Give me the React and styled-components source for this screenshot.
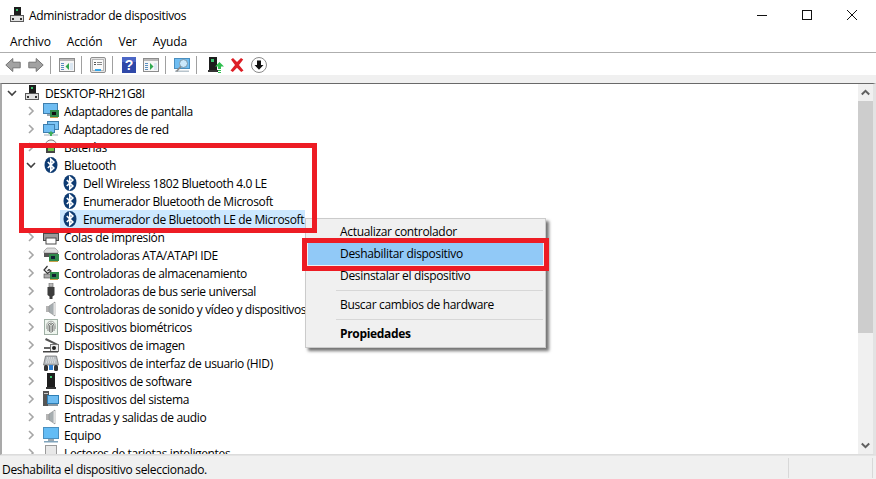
import React from "react";
import styled, { createGlobalStyle } from "styled-components";

const Global = createGlobalStyle`
  html, body { margin: 0; padding: 0; background: #fff; }
  body { font-family: "Open Sans", "Noto Sans", sans-serif; font-size: 12px; color: #000; }
  * { box-sizing: border-box; }
`;

const Window = styled.div`
  position: relative;
  width: 876px;
  height: 479px;
  overflow: hidden;
  background: #fff;
  display: flex;
  flex-direction: column;
`;
const TitleBar = styled.div`
  height: 30px;
  display: flex;
  align-items: center;
  padding-left: 9px;
  flex: none;
`;
const TitleText = styled.span`
  margin-left: 4px;
  letter-spacing: -0.32px;
`;
const WinControls = styled.div`
  margin-left: auto;
  display: flex;
  padding-right: 2px;
`;
const WinButton = styled.div`
  width: 45px;
  height: 30px;
  display: flex;
  align-items: center;
  justify-content: center;
`;
const MenuBar = styled.div`
  height: 23px;
  display: flex;
  align-items: center;
  gap: 16px;
  padding-left: 10px;
  border-bottom: 1px solid #aeaeae;
  flex: none;
`;
const MenuEntry = styled.span`
  letter-spacing: -0.16px;
`;
const Toolbar = styled.div`
  height: 22px;
  display: flex;
  align-items: center;
  padding: 2px 0 0 5px;
  flex: none;
`;
const ToolIcon = styled.div`
  width: 16px;
  height: 16px;
  margin-left: ${(p) => p.$gap ?? 0}px;
  flex: none;
`;
const ToolSep = styled.div`
  width: 1px;
  height: 18px;
  background: #a0a0a0;
  margin-left: ${(p) => p.$gap ?? 6}px;
  flex: none;
`;
const Strip = styled.div`
  height: 8px;
  background: #f0f0f0;
  flex: none;
`;
const TreeFrame = styled.div`
  height: 372px;
  flex: none;
  display: flex;
  border-top: 1px solid #696969;
  border-left: 2px solid #a9a9a9;
  border-right: 3px solid #e3e3e3;
  border-bottom: 1px solid #dcdcdc;
`;
const TreeList = styled.div`
  flex: 1;
  min-width: 0;
  overflow: hidden;
`;
const Row = styled.div`
  height: 18px;
  display: flex;
  align-items: center;
  white-space: nowrap;
  padding-left: ${(p) => p.$level * 19 + 2}px;
`;
const Chevron = styled.div`
  width: 16px;
  height: 18px;
  margin-right: 2px;
  display: flex;
  align-items: center;
  justify-content: center;
  flex: none;
`;
const Item = styled.div`
  height: 18px;
  display: flex;
  align-items: center;
  gap: 5px;
  padding: 0 1px 0 2px;
  background: ${(p) => (p.$selected ? "#cce8ff" : "transparent")};
`;
const TreeIcon = styled.div`
  width: 16px;
  height: 16px;
  flex: none;
`;
const Label = styled.span`
  letter-spacing: -0.36px;
`;
const Scrollbar = styled.div`
  width: 15px;
  background: #f0f0f0;
  display: flex;
  flex-direction: column;
  flex: none;
`;
const ScrollArrow = styled.div`
  height: 17px;
  display: flex;
  align-items: center;
  justify-content: center;
  flex: none;
  margin-top: ${(p) => (p.$end ? "auto" : 0)};
`;
const Thumb = styled.div`
  height: 232px;
  background: #cdcdcd;
  flex: none;
`;
const StatusBar = styled.div`
  flex: 1;
  display: flex;
  background: #f0f0f0;
  padding-top: 2px;
  border-top: 1px solid #e4e4e4;
`;
const StatusText = styled.div`
  width: 788px;
  padding: 2px 0 0 2px;
  line-height: 20px;
  letter-spacing: -0.31px;
  flex: none;
`;
const StatusCell = styled.div`
  width: 85px;
  margin-bottom: 2px;
  border-left: 1px solid #d8d8d8;
  border-right: 1px solid #d8d8d8;
  flex: none;
`;
const ContextMenu = styled.div`
  position: absolute;
  left: 305px;
  top: 218px;
  width: 241px;
  height: 130px;
  padding: 2px;
  background: #f0f0f0;
  border: 1px solid #cbcbcb;
  box-shadow: 3px 3px 3px rgba(0, 0, 0, 0.55);
`;
const ContextItem = styled.div`
  height: 22px;
  line-height: 22px;
  padding-left: 32px;
  letter-spacing: -0.32px;
  font-weight: ${(p) => (p.$bold ? 700 : 400)};
  background: ${(p) => (p.$active ? "#91c9f7" : "transparent")};
`;
const ContextSep = styled.div`
  height: 7px;
  margin-left: 28px;
  padding-top: 3px;
  &::before {
    content: "";
    display: block;
    height: 1px;
    background: #d7d7d7;
  }
`;
const RedFrame = styled.div`
  position: absolute;
  left: ${(p) => p.$x}px;
  top: ${(p) => p.$y}px;
  width: ${(p) => p.$w}px;
  height: ${(p) => p.$h}px;
  border: 5px solid #ed1c24;
  pointer-events: none;
`;

const S = ({ children, size = 16, vb = "0 0 16 16" }) => (
  <svg width={size} height={size} viewBox={vb} style={{ display: "block" }}>
    {children}
  </svg>
);

const Tower = () => (
  <S>
    <rect x="5" y="0" width="7" height="9" fill="#1d1d1d" />
    <rect x="7" y="2" width="2" height="2" fill="#39c46e" />
    <rect x="1.5" y="8.5" width="13" height="6" fill="#e2e2e2" stroke="#5a5a5a" />
    <rect x="3" y="11" width="2" height="2" fill="#333" />
    <rect x="11" y="11" width="2" height="2" fill="#333" />
  </S>
);
const MonitorCard = () => (
  <S>
    <rect x="0.5" y="0.5" width="14" height="10" fill="#6fbdf2" stroke="#3f7fae" />
    <rect x="4" y="11" width="7" height="2" fill="#9aa7b0" />
    <rect x="7" y="7" width="9" height="7" fill="#2f8a4b" />
    <rect x="9" y="9" width="4" height="3" fill="#111" />
    <rect x="7" y="14" width="8" height="1" fill="#c9a24b" />
  </S>
);
const Network = () => (
  <S>
    <rect x="4.5" y="0.5" width="11" height="8" fill="#7cc4f4" stroke="#3f7fae" />
    <rect x="0.5" y="3.5" width="11" height="8" fill="#6fbdf2" stroke="#3f7fae" />
    <rect x="1" y="13" width="14" height="2" fill="#cfd6da" />
    <path d="M8 10l3 3H9v2H7v-2H5z" fill="#3fae5a" />
  </S>
);
const Battery = () => (
  <S>
    <ellipse cx="8" cy="5" rx="5" ry="4" fill="#f4f4f4" stroke="#777" />
    <rect x="3" y="8" width="9" height="6" fill="#444" />
    <rect x="5" y="9" width="6" height="3" fill="#6ec04a" />
  </S>
);
const Bluetooth = () => (
  <S>
    <ellipse cx="8" cy="8" rx="6.5" ry="8" fill="#0e3b72" />
    <path d="M4.800 5l6 6-3 2.800V2.200l3 2.800-6 6" fill="none" stroke="#fff" strokeWidth="1.7" />
  </S>
);
const Printer = () => (
  <S>
    <rect x="4" y="0" width="8" height="5" fill="#fff" stroke="#777" />
    <rect x="0.5" y="4.5" width="15" height="7" fill="#9a9a9a" stroke="#4a4a4a" />
    <rect x="3" y="9" width="10" height="6" fill="#fff" stroke="#4a4a4a" />
  </S>
);
const Ata = () => (
  <S>
    <path d="M1 4l3-3h8l3 3v2H1z" fill="#dcdcdc" stroke="#888" strokeWidth="0.6" />
    <rect x="1" y="6" width="14" height="4" fill="#555" />
    <rect x="6" y="7" width="10" height="7" fill="#2f8a4b" />
    <rect x="8" y="9" width="4" height="3" fill="#123" />
    <rect x="6" y="14" width="9" height="1" fill="#c9a24b" />
  </S>
);
const Storage = () => (
  <S>
    <path d="M4.500 1L1 5l3.500 3.500L8 6 6 4.500 4.500 6" fill="#eee" stroke="#333" strokeWidth="1.2" />
    <rect x="1" y="9" width="7" height="4" fill="#aaa" stroke="#444" strokeWidth="0.6" />
    <rect x="7" y="7" width="9" height="7" fill="#2f8a4b" />
    <rect x="9" y="9" width="4" height="3" fill="#123" />
    <rect x="7" y="14" width="8" height="1" fill="#c9a24b" />
  </S>
);
const Usb = () => (
  <S>
    <rect x="6" y="0" width="4" height="4" fill="#b8b8b8" stroke="#666" strokeWidth="0.6" />
    <path d="M4.500 4h7v8l-2 1.500v2.500h-3v-2.500l-2-1.500z" fill="#3d3d3d" />
  </S>
);
const Speaker = () => (
  <S>
    <rect x="3" y="5" width="3" height="6" fill="#b5b5b5" />
    <path d="M6 5l6-4v14l-6-4z" fill="#a6adb0" stroke="#8a8a8a" strokeWidth="0.6" />
    <rect x="10.500" y="2" width="1.500" height="12" fill="#e0e0e0" />
  </S>
);
const Biometric = () => (
  <S>
    <rect x="1.500" y="0.500" width="13" height="15" fill="#eef5ee" stroke="#9fb0a5" />
    <path d="M5 12V7a3 3 0 0 1 6 0v5M6.500 13V7a1.500 1.500 0 0 1 3 0v6M8 7v7" fill="none" stroke="#666" strokeWidth="0.8" />
    <path d="M3.700 10V6.500a4.300 4.300 0 0 1 8.600 0V10" fill="none" stroke="#888" strokeWidth="0.7" />
  </S>
);
const Camera = () => (
  <S>
    <path d="M3 1l12 6-1 1.500L2 3z" fill="#555" />
    <rect x="7.500" y="7.500" width="8" height="7" fill="#eee" stroke="#777" />
    <circle cx="11" cy="11" r="2" fill="#222" />
    <rect x="1" y="10" width="6" height="2" fill="#666" />
    <rect x="0" y="14" width="15" height="1.500" fill="#444" />
  </S>
);
const Hid = () => (
  <S>
    <path d="M2.500 1h11l2 9H.5z" fill="#b9bec2" stroke="#666" strokeWidth="0.7" />
    <path d="M4 3h8M3.500 5h9M3 7h10" stroke="#f2f2f2" strokeWidth="1" strokeDasharray="1 1" />
    <rect x="1" y="10" width="4" height="6" rx="1.500" fill="#333" />
    <rect x="11" y="10" width="4" height="6" rx="1.500" fill="#333" />
    <rect x="6" y="10" width="4" height="5" fill="#2f7fd0" />
  </S>
);
const Software = () => (
  <S>
    <rect x="4" y="0" width="8" height="14" fill="#1d1d1d" />
    <rect x="7" y="3" width="2" height="2" fill="#39c46e" />
    <rect x="3" y="14" width="10" height="2" fill="#333" />
  </S>
);
const System = () => (
  <S>
    <rect x="0" y="0" width="6" height="15" fill="#555" />
    <rect x="1" y="2" width="4" height="1" fill="#ccc" />
    <rect x="4.500" y="4.500" width="11" height="8" fill="#6fbdf2" stroke="#2f7fb5" />
    <rect x="5" y="13" width="10" height="2" fill="#8a98a2" />
  </S>
);
const Monitor = () => (
  <S>
    <rect x="0.500" y="0.500" width="15" height="11" fill="#63bcf5" stroke="#4a8fbf" />
    <rect x="5" y="12" width="6" height="2" fill="#9aa7b0" />
    <rect x="1" y="14" width="14" height="1.500" fill="#7fa3bb" />
  </S>
);
const SmartCard = () => (
  <S>
    <rect x="2.500" y="0.500" width="11" height="15" fill="#e8e8e8" stroke="#9a9a9a" />
    <rect x="7" y="9" width="2" height="2" fill="#4c90c8" />
  </S>
);

const ChevronRight = () => (
  <svg width="7" height="10" viewBox="0 0 7 10" style={{ display: "block" }}>
    <path d="M1 1l4 4-4 4" fill="none" stroke="#a6a6a6" strokeWidth="1.6" />
  </svg>
);
const ChevronDown = () => (
  <svg width="10" height="7" viewBox="0 0 10 7" style={{ display: "block" }}>
    <path d="M1 1l4 4 4-4" fill="none" stroke="#404040" strokeWidth="1.6" />
  </svg>
);

const BackArrow = () => (
  <S>
    <path d="M.8 8l7-6.500v3.700h7.400v5.600H7.800v3.700z" fill="#a2a2a2" stroke="#757575" />
  </S>
);
const ForwardArrow = () => (
  <S>
    <path d="M15.200 8l-7-6.500v3.700H.8v5.600h7.400v3.700z" fill="#a2a2a2" stroke="#757575" />
  </S>
);
const PaneWindow = ({ dir }) => (
  <S>
    <rect x="0.500" y="1.500" width="15" height="13" fill="#f6f6f6" stroke="#8c8c8c" />
    <rect x="1" y="2" width="14" height="2" fill="#b9b9b9" />
    <rect x="2" y="6" width="3" height="1" fill="#5a8fc0" />
    <rect x="2" y="8" width="3" height="1" fill="#5a8fc0" />
    <rect x="2" y="10" width="3" height="1" fill="#5a8fc0" />
    <rect x="2" y="12" width="3" height="1" fill="#5a8fc0" />
    <rect x="11" y="6" width="3" height="7" fill="#dbe7f2" />
    <path d={dir === "left" ? "M10 6v7L6.500 9.500z" : "M7 6v7l3.500-3.500z"} fill="#2fa84f" />
  </S>
);
const Properties = () => (
  <S>
    <rect x="0.500" y="0.500" width="15" height="15" rx="1.500" fill="#e4e4e4" stroke="#8f8f8f" />
    <rect x="2.500" y="2.500" width="11" height="11" fill="#fbfbfb" stroke="#b8b8b8" />
    <rect x="4" y="5" width="2" height="1" fill="#555" />
    <rect x="7" y="5" width="5" height="1" fill="#888" />
    <rect x="4" y="7" width="2" height="1" fill="#555" />
    <rect x="7" y="7" width="5" height="1" fill="#888" />
    <rect x="5" y="12" width="6" height="2" fill="#35a6e8" />
  </S>
);
const Help = () => (
  <S>
    <rect x="1" y="0" width="14" height="16" fill="#2f48a8" />
    <rect x="1" y="0" width="14" height="5" fill="#4b66c6" />
    <text x="8" y="13" textAnchor="middle" fontFamily="Liberation Sans, sans-serif" fontSize="14" fontWeight="700" fill="#fff">?</text>
  </S>
);
const Scan = () => (
  <S>
    <rect x="0.500" y="1.500" width="15" height="10" fill="#6fbdf2" stroke="#4a8fbf" />
    <rect x="1" y="13.500" width="14" height="1.500" fill="#b8c4cc" />
    <circle cx="9.500" cy="6.500" r="4" fill="#cbe8fb" stroke="#7a97aa" />
    <path d="M6.800 9.500L2.500 14.500" stroke="#8a8a8a" strokeWidth="1.600" />
  </S>
);
const TowerUp = () => (
  <S>
    <rect x="1" y="0" width="8" height="13" fill="#1d1d1d" />
    <rect x="3" y="2" width="3" height="3" fill="#39c46e" />
    <rect x="0" y="13" width="10" height="2" fill="#333" />
    <path d="M11.500 5l4.500 4.500h-3V12h-3V9.500H7z" fill="#2fbf4f" />
    <rect x="10" y="13" width="3" height="1" fill="#2fbf4f" />
    <rect x="10" y="15" width="3" height="1" fill="#2fbf4f" />
  </S>
);
const RedX = () => (
  <S>
    <path d="M2 2.500l2-1.500 4 4 4-4 2.200 1.500L10 8l4.500 5.500-2.300 1.500L8 10.800 3.800 15l-2.300-1.500L6 8z" fill="#dd1f26" />
  </S>
);
const DownCircle = () => (
  <S>
    <circle cx="8" cy="8" r="7.500" fill="#fff" stroke="#8a8a8a" />
    <path d="M6 3.500h4V8h2.500L8 12.800 3.500 8H6z" fill="#111" />
  </S>
);

const Minimize = () => (
  <svg width="10" height="10" viewBox="0 0 10 10" style={{ display: "block" }}>
    <rect x="0" y="5" width="10" height="1" fill="#111" />
  </svg>
);
const Maximize = () => (
  <svg width="10" height="10" viewBox="0 0 10 10" style={{ display: "block" }}>
    <rect x="0.500" y="0.500" width="9" height="9" fill="none" stroke="#111" />
  </svg>
);
const CloseX = () => (
  <svg width="10" height="10" viewBox="0 0 10 10" style={{ display: "block" }}>
    <path d="M0 0l10 10M10 0L0 10" stroke="#111" strokeWidth="1" />
  </svg>
);
const ScrollUp = ({ flip }) => (
  <svg width="9" height="7" viewBox="0 0 9 7" style={{ display: "block", transform: flip ? "rotate(180deg)" : "none" }}>
    <path d="M.8 5.500L4.500 1.800l3.700 3.700" fill="none" stroke="#606060" strokeWidth="2" />
  </svg>
);

const rows = [
  { level: 0, icon: Tower, text: "DESKTOP-RH21G8I", state: "open" },
  { level: 1, icon: MonitorCard, text: "Adaptadores de pantalla" },
  { level: 1, icon: Network, text: "Adaptadores de red" },
  { level: 1, icon: Battery, text: "Baterías" },
  { level: 1, icon: Bluetooth, text: "Bluetooth", state: "open" },
  { level: 2, icon: Bluetooth, text: "Dell Wireless 1802 Bluetooth 4.0 LE", state: "leaf" },
  { level: 2, icon: Bluetooth, text: "Enumerador Bluetooth de Microsoft", state: "leaf" },
  { level: 2, icon: Bluetooth, text: "Enumerador de Bluetooth LE de Microsoft", state: "leaf", selected: true },
  { level: 1, icon: Printer, text: "Colas de impresión" },
  { level: 1, icon: Ata, text: "Controladoras ATA/ATAPI IDE" },
  { level: 1, icon: Storage, text: "Controladoras de almacenamiento" },
  { level: 1, icon: Usb, text: "Controladoras de bus serie universal" },
  { level: 1, icon: Speaker, text: "Controladoras de sonido y vídeo y dispositivos de juego" },
  { level: 1, icon: Biometric, text: "Dispositivos biométricos" },
  { level: 1, icon: Camera, text: "Dispositivos de imagen" },
  { level: 1, icon: Hid, text: "Dispositivos de interfaz de usuario (HID)" },
  { level: 1, icon: Software, text: "Dispositivos de software" },
  { level: 1, icon: System, text: "Dispositivos del sistema" },
  { level: 1, icon: Speaker, text: "Entradas y salidas de audio" },
  { level: 1, icon: Monitor, text: "Equipo" },
  { level: 1, icon: SmartCard, text: "Lectores de tarjetas inteligentes" },
];

const menus = ["Archivo", "Acción", "Ver", "Ayuda"];

export default function App() {
  return (
    <Window>
      <Global />
      <TitleBar>
        <TreeIcon><Tower /></TreeIcon>
        <TitleText>Administrador de dispositivos</TitleText>
        <WinControls>
          <WinButton><Minimize /></WinButton>
          <WinButton><Maximize /></WinButton>
          <WinButton><CloseX /></WinButton>
        </WinControls>
      </TitleBar>
      <MenuBar>
        {menus.map((m) => <MenuEntry key={m}>{m}</MenuEntry>)}
      </MenuBar>
      <Toolbar>
        <ToolIcon><BackArrow /></ToolIcon>
        <ToolIcon $gap={7}><ForwardArrow /></ToolIcon>
        <ToolSep />
        <ToolIcon $gap={8}><PaneWindow dir="left" /></ToolIcon>
        <ToolSep />
        <ToolIcon $gap={8}><Properties /></ToolIcon>
        <ToolSep />
        <ToolIcon $gap={8}><Help /></ToolIcon>
        <ToolIcon $gap={6}><PaneWindow dir="right" /></ToolIcon>
        <ToolSep />
        <ToolIcon $gap={8}><Scan /></ToolIcon>
        <ToolSep />
        <ToolIcon $gap={11}><TowerUp /></ToolIcon>
        <ToolIcon $gap={5}><RedX /></ToolIcon>
        <ToolIcon $gap={6}><DownCircle /></ToolIcon>
      </Toolbar>
      <Strip />
      <TreeFrame>
        <TreeList>
          {rows.map((r) => {
            const Icon = r.icon;
            return (
              <Row key={r.text} $level={r.level}>
                <Chevron>
                  {r.state === "open" ? <ChevronDown /> : r.state === "leaf" ? null : <ChevronRight />}
                </Chevron>
                <Item $selected={r.selected}>
                  <TreeIcon><Icon /></TreeIcon>
                  <Label>{r.text}</Label>
                </Item>
              </Row>
            );
          })}
        </TreeList>
        <Scrollbar>
          <ScrollArrow><ScrollUp /></ScrollArrow>
          <Thumb />
          <ScrollArrow $end><ScrollUp flip /></ScrollArrow>
        </Scrollbar>
      </TreeFrame>
      <StatusBar>
        <StatusText>Deshabilita el dispositivo seleccionado.</StatusText>
        <StatusCell />
      </StatusBar>
      <ContextMenu>
        <ContextItem>Actualizar controlador</ContextItem>
        <ContextItem $active>Deshabilitar dispositivo</ContextItem>
        <ContextItem>Desinstalar el dispositivo</ContextItem>
        <ContextSep />
        <ContextItem>Buscar cambios de hardware</ContextItem>
        <ContextSep />
        <ContextItem $bold>Propiedades</ContextItem>
      </ContextMenu>
      <RedFrame $x={19} $y={143} $w={298} $h={90} />
      <RedFrame $x={302} $y={238} $w={247} $h={33} />
    </Window>
  );
}
